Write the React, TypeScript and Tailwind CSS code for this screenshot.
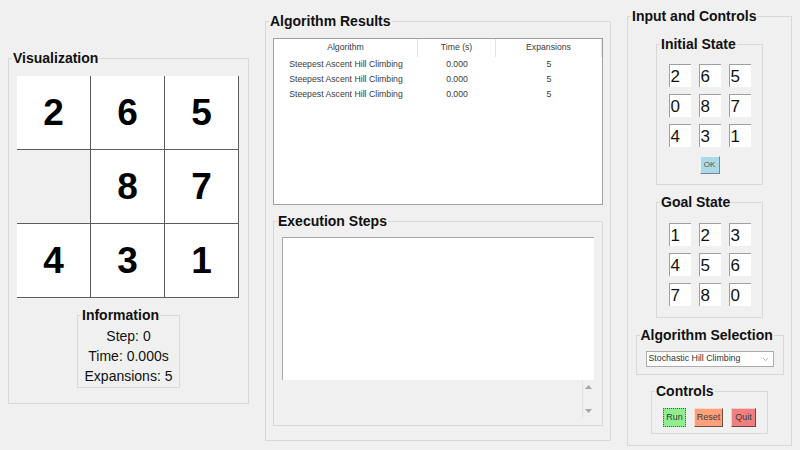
import type { ReactNode } from "react";
import { ChevronDown } from "lucide-react";

const board = [2, 6, 5, 0, 8, 7, 4, 3, 1];
const initialState = [2, 6, 5, 0, 8, 7, 4, 3, 1];
const goalState = [1, 2, 3, 4, 5, 6, 7, 8, 0];

const results = [
  { algorithm: "Steepest Ascent Hill Climbing", time: "0.000", expansions: 5 },
  { algorithm: "Steepest Ascent Hill Climbing", time: "0.000", expansions: 5 },
  { algorithm: "Steepest Ascent Hill Climbing", time: "0.000", expansions: 5 },
];

interface GroupProps {
  title: string;
  className?: string;
  children: ReactNode;
}

// tk LabelFrame look: thin light border, bold title sitting on the top edge
function Group({ title, className, children }: GroupProps) {
  return (
    <fieldset className={`border border-[#d8d8d8] ${className ?? ""}`}>
      <legend className="ml-[3px] px-[1px] text-[14px] leading-4 font-bold text-[#111]">
        {title}
      </legend>
      {children}
    </fieldset>
  );
}

function StateGrid({ values }: { values: number[] }) {
  return (
    <div className="grid grid-cols-[22px_22px_22px] gap-x-[8px] gap-y-[7px]">
      {values.map((v, i) => (
        <div
          key={i}
          className="h-[23px] w-[22px] bg-white border-t border-l border-[#a0a0a0] pl-[1px] pt-[1px] text-[17px] leading-[21px] text-[#111]"
        >
          {v}
        </div>
      ))}
    </div>
  );
}

export default function App() {
  return (
    <div className="w-[800px] h-[450px] overflow-hidden bg-[#f0f0f0] flex items-start gap-[16px] px-[8px] font-['Liberation_Sans',Arial,sans-serif] text-[#111] antialiased">
      {/* Visualization */}
      <Group title="Visualization" className="w-[241px] mt-[50px]">
        <div className="pt-[10px] pl-[8px]">
          <div className="grid grid-cols-[74px_74px_74px] w-[222px]">
            {board.map((n, i) => (
              <div
                key={i}
                className={`h-[74px] border-r border-b border-[#5c5c5c] flex items-center justify-center text-[37px] font-bold text-black ${
                  n === 0 ? "bg-[#f0f0f0]" : "bg-white"
                }`}
              >
                {n === 0 ? "" : n}
              </div>
            ))}
          </div>
        </div>
        <div className="flex justify-center pt-[9px] pb-[15px]">
          <Group title="Information" className="w-[103px]">
            <div className="pt-[3px] pb-[1px] text-center text-[14px] leading-5">
              <div>Step: 0</div>
              <div>Time: 0.000s</div>
              <div>Expansions: 5</div>
            </div>
          </Group>
        </div>
      </Group>

      {/* Results */}
      <Group title="Algorithm Results" className="w-[346px] mt-[13px]">
        <div className="px-[7px] pt-[9px] pb-[14px]">
          <div className="h-[167px] bg-white border border-[#a0a0a0] text-[8.7px] text-[#3a3a3a]">
            <div className="grid grid-cols-[144px_78px_1fr] h-[18px]">
              <div className="border-r border-[#e3e3e3] flex items-center justify-center">Algorithm</div>
              <div className="border-r border-[#e3e3e3] flex items-center justify-center">Time (s)</div>
              <div className="border-r border-[#e3e3e3] flex items-center justify-center">Expansions</div>
            </div>
            {results.map((r, i) => (
              <div key={i} className="grid grid-cols-[144px_78px_1fr] h-[15px] items-center text-center">
                <div>{r.algorithm}</div>
                <div>{r.time}</div>
                <div>{r.expansions}</div>
              </div>
            ))}
          </div>

          <Group title="Execution Steps" className="mt-[8px]">
            <div className="px-[8px] pt-[8px] pb-[7px]">
              <div className="h-[143px] bg-white border-t border-l border-[#a9a9a9]" />
              <div className="h-[38px] flex justify-end">
                <div className="w-[12px] border-l border-[#e2e2e2] flex flex-col items-center justify-between py-[5px]">
                  <svg width="7" height="4" viewBox="0 0 7 4">
                    <polygon points="3.5,0 7,4 0,4" fill="#a6a6a6" />
                  </svg>
                  <svg width="7" height="4" viewBox="0 0 7 4">
                    <polygon points="0,0 7,0 3.5,4" fill="#a6a6a6" />
                  </svg>
                </div>
              </div>
            </div>
          </Group>
        </div>
      </Group>

      {/* Input and Controls */}
      <Group title="Input and Controls" className="w-[165px] mt-[8px]">
        <div className="flex flex-col items-center pt-[12px] pb-[11px]">
          <Group title="Initial State" className="w-[107px]">
            <div className="flex flex-col items-center pt-[12px] pb-[10px]">
              <StateGrid values={initialState} />
              <button className="mt-[9px] w-[20px] h-[18px] bg-[#add8e6] border border-t-[#e6f4f8] border-l-[#e6f4f8] border-r-[#6f8a94] border-b-[#6f8a94] text-[8px] leading-none text-[#555]">
                OK
              </button>
            </div>
          </Group>

          <Group title="Goal State" className="w-[107px] mt-[9px]">
            <div className="flex flex-col items-center pt-[13px] pb-[11px]">
              <StateGrid values={goalState} />
            </div>
          </Group>

          <Group title="Algorithm Selection" className="w-[148px] mt-[9px]">
            <div className="flex justify-center pt-[8px] pb-[7px]">
              <div className="w-[128px] h-[16px] bg-white border border-[#acacac] flex items-center justify-between pl-[2px] pr-[3px] text-[8.8px] text-[#333]">
                <span>Stochastic Hill Climbing</span>
                <ChevronDown size={9} strokeWidth={1.5} color="#777" />
              </div>
            </div>
          </Group>

          <Group title="Controls" className="w-[117px] mt-[8px]">
            <div className="flex justify-center gap-[8px] pt-[9px] pb-[6px] text-[9px] text-[#3a3a3a]">
              <button className="w-[23px] h-[19px] bg-[#90ee90] border border-dotted border-[#4a5a4a]">Run</button>
              <button className="w-[29px] h-[19px] bg-[#ffa07a] border border-t-[#ffd9c9] border-l-[#ffd9c9] border-r-[#6b5046] border-b-[#6b5046]">
                Reset
              </button>
              <button className="w-[25px] h-[19px] bg-[#f08080] border border-t-[#f9c9c9] border-l-[#f9c9c9] border-r-[#6b4444] border-b-[#6b4444]">
                Quit
              </button>
            </div>
          </Group>
        </div>
      </Group>
    </div>
  );
}
